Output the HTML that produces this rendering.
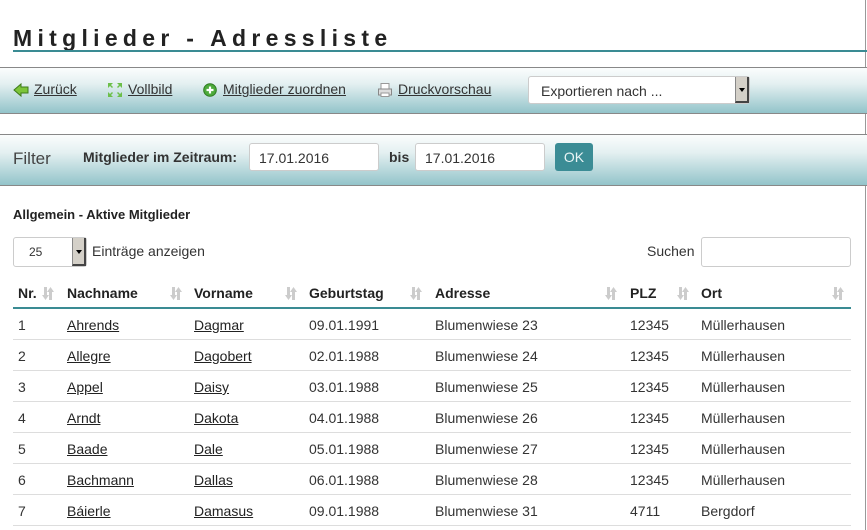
<!DOCTYPE html>
<html><head><meta charset="utf-8"><style>
*{box-sizing:border-box}
body{margin:0;width:867px;height:530px;overflow:hidden;background:#fff;font-family:"Liberation Sans",Arial,sans-serif;color:#333;position:relative}
.abs{position:absolute}
h1{position:absolute;left:13px;top:25px;margin:0;font-size:23px;font-weight:bold;letter-spacing:5.3px;color:#222;white-space:nowrap}
.uline{left:13px;top:50px;width:854px;height:2px;background:#3a8b93}
.bar{left:0;width:867px;border-top:1px solid #888;border-bottom:1px solid #888;background:linear-gradient(#fbfdfd,#e4f0f1 35%,#93c4ca)}
.tb a{position:absolute;top:81px;font-size:14px;color:#333;text-decoration:underline}
.inp{position:absolute;background:#fff;border:1px solid #ccc;border-radius:3px;font-size:14px;color:#333;padding-left:9px}
.sel{position:absolute;background:#fff;border:1px solid #ccc;border-radius:3px;font-size:14px;color:#333}
.arr{position:absolute;right:0;top:0;bottom:0;width:14px;background:#d4d0c8;border-left:1px solid #888;border-right:2px solid #444;border-bottom:2px solid #444}
.arr:after{content:"";position:absolute;left:3px;top:45%;border:3.5px solid transparent;border-top:4px solid #000}
.th{position:absolute;top:285px;font-size:14px;font-weight:bold;color:#222}
.si{position:absolute;top:287px}
.row{position:absolute;left:13px;width:838px;height:31px;border-bottom:1px solid #ddd;font-size:14px;color:#333}
.row span{position:absolute;top:8px}
.row u{color:#222}
</style></head><body>
<svg width="0" height="0" style="position:absolute"><defs><symbol id="s" viewBox="0 0 12 13"><path d="M1 0h3v8h2l-3.5 5L-1 8h2z" fill="#ccc" transform="translate(1,0)"/><path d="M8 13h3V5h2L9.5 0 6 5h2z" fill="#ccc" transform="translate(-1,0)"/></symbol></defs></svg>
<div class="abs" style="right:1px;top:0;width:1px;height:530px;background:#999"></div>
<h1>Mitglieder - Adressliste</h1>
<div class="abs uline"></div>

<div class="abs bar" style="top:67px;height:47px"></div>
<div class="tb">
<svg class="abs" style="left:13px;top:82px" width="16" height="16" viewBox="0 0 16 16"><path d="M1 8 L8 2 L8 5 L15 5 L15 11 L8 11 L8 14 Z" fill="#7cc53a" stroke="#3d7a1a" stroke-width="1"/></svg>
<a style="left:34px">Zurück</a>
<svg class="abs" style="left:107px;top:82px" width="16" height="16" viewBox="0 0 16 16" fill="#6cbf4a"><path d="M1 1h5l-2 2 2 2-1 1-2-2-2 2zM15 1v5l-2-2-2 2-1-1 2-2-2-2zM1 15v-5l2 2 2-2 1 1-2 2 2 2zM15 15h-5l2-2-2-2 1-1 2 2 2-2z"/></svg>
<a style="left:128px">Vollbild</a>
<svg class="abs" style="left:203px;top:83px" width="14" height="14" viewBox="0 0 14 14"><circle cx="7" cy="7" r="6.3" fill="#4caa3a" stroke="#2e7a22"/><path d="M7 3.5v7M3.5 7h7" stroke="#fff" stroke-width="2.2"/></svg>
<a style="left:223px">Mitglieder zuordnen</a>
<svg class="abs" style="left:377px;top:82px" width="16" height="16" viewBox="0 0 16 16"><rect x="4" y="1.5" width="8" height="6" fill="#fff" stroke="#999"/><rect x="1.5" y="7" width="13" height="6" fill="#ddd" stroke="#888"/><rect x="4" y="11" width="8" height="3.5" fill="#fff" stroke="#999"/></svg>
<a style="left:398px">Druckvorschau</a>
</div>
<div class="sel" style="left:528px;top:76px;width:222px;height:28px;padding:6px 0 0 12px">Exportieren nach ...<div class="arr"></div></div>

<div class="abs bar" style="top:134px;height:52px"></div>
<div class="abs" style="left:13px;top:149px;font-size:17px;color:#444">Filter</div>
<div class="abs" style="left:83px;top:149px;font-size:14px;font-weight:bold;color:#333">Mitglieder im Zeitraum:</div>
<div class="inp" style="left:249px;top:143px;width:130px;height:28px;padding-top:6px">17.01.2016</div>
<div class="abs" style="left:389px;top:149px;font-size:14px;font-weight:bold;color:#333">bis</div>
<div class="inp" style="left:415px;top:143px;width:130px;height:28px;padding-top:6px">17.01.2016</div>
<div class="abs" style="left:555px;top:143px;width:38px;height:28px;background:#3b8c95;border-radius:3px;color:#e8f4f5;font-size:14px;text-align:center;line-height:28px">OK</div>

<div class="abs" style="left:13px;top:207px;font-size:13px;font-weight:bold;color:#222">Allgemein - Aktive Mitglieder</div>
<div class="sel" style="left:13px;top:237px;width:74px;height:30px;font-size:12px;padding:7px 0 0 15px">25<div class="arr"></div></div>
<div class="abs" style="left:92px;top:243px;font-size:14px;color:#333">Einträge anzeigen</div>
<div class="abs" style="left:647px;top:243px;font-size:14px;color:#333">Suchen</div>
<div class="inp" style="left:701px;top:237px;width:150px;height:30px"></div>

<div class="th" style="left:18px">Nr.</div><svg class="si" style="left:42px" width="12" height="13"><use href="#s"/></svg>
<div class="th" style="left:67px">Nachname</div><svg class="si" style="left:170px" width="12" height="13"><use href="#s"/></svg>
<div class="th" style="left:194px">Vorname</div><svg class="si" style="left:285px" width="12" height="13"><use href="#s"/></svg>
<div class="th" style="left:309px">Geburtstag</div><svg class="si" style="left:410px" width="12" height="13"><use href="#s"/></svg>
<div class="th" style="left:435px">Adresse</div><svg class="si" style="left:605px" width="12" height="13"><use href="#s"/></svg>
<div class="th" style="left:630px">PLZ</div><svg class="si" style="left:677px" width="12" height="13"><use href="#s"/></svg>
<div class="th" style="left:701px">Ort</div><svg class="si" style="left:832px" width="12" height="13"><use href="#s"/></svg>
<div class="abs" style="left:13px;top:307px;width:838px;height:2px;background:#3a8b93"></div>

<div class="row" style="top:309px"><span style="left:5px">1</span><span style="left:54px"><u>Ahrends</u></span><span style="left:181px"><u>Dagmar</u></span><span style="left:296px">09.01.1991</span><span style="left:422px">Blumenwiese 23</span><span style="left:617px">12345</span><span style="left:688px">Müllerhausen</span></div>
<div class="row" style="top:340px"><span style="left:5px">2</span><span style="left:54px"><u>Allegre</u></span><span style="left:181px"><u>Dagobert</u></span><span style="left:296px">02.01.1988</span><span style="left:422px">Blumenwiese 24</span><span style="left:617px">12345</span><span style="left:688px">Müllerhausen</span></div>
<div class="row" style="top:371px"><span style="left:5px">3</span><span style="left:54px"><u>Appel</u></span><span style="left:181px"><u>Daisy</u></span><span style="left:296px">03.01.1988</span><span style="left:422px">Blumenwiese 25</span><span style="left:617px">12345</span><span style="left:688px">Müllerhausen</span></div>
<div class="row" style="top:402px"><span style="left:5px">4</span><span style="left:54px"><u>Arndt</u></span><span style="left:181px"><u>Dakota</u></span><span style="left:296px">04.01.1988</span><span style="left:422px">Blumenwiese 26</span><span style="left:617px">12345</span><span style="left:688px">Müllerhausen</span></div>
<div class="row" style="top:433px"><span style="left:5px">5</span><span style="left:54px"><u>Baade</u></span><span style="left:181px"><u>Dale</u></span><span style="left:296px">05.01.1988</span><span style="left:422px">Blumenwiese 27</span><span style="left:617px">12345</span><span style="left:688px">Müllerhausen</span></div>
<div class="row" style="top:464px"><span style="left:5px">6</span><span style="left:54px"><u>Bachmann</u></span><span style="left:181px"><u>Dallas</u></span><span style="left:296px">06.01.1988</span><span style="left:422px">Blumenwiese 28</span><span style="left:617px">12345</span><span style="left:688px">Müllerhausen</span></div>
<div class="row" style="top:495px"><span style="left:5px">7</span><span style="left:54px"><u>Báierle</u></span><span style="left:181px"><u>Damasus</u></span><span style="left:296px">09.01.1988</span><span style="left:422px">Blumenwiese 31</span><span style="left:617px">4711</span><span style="left:688px">Bergdorf</span></div>
</body></html>
